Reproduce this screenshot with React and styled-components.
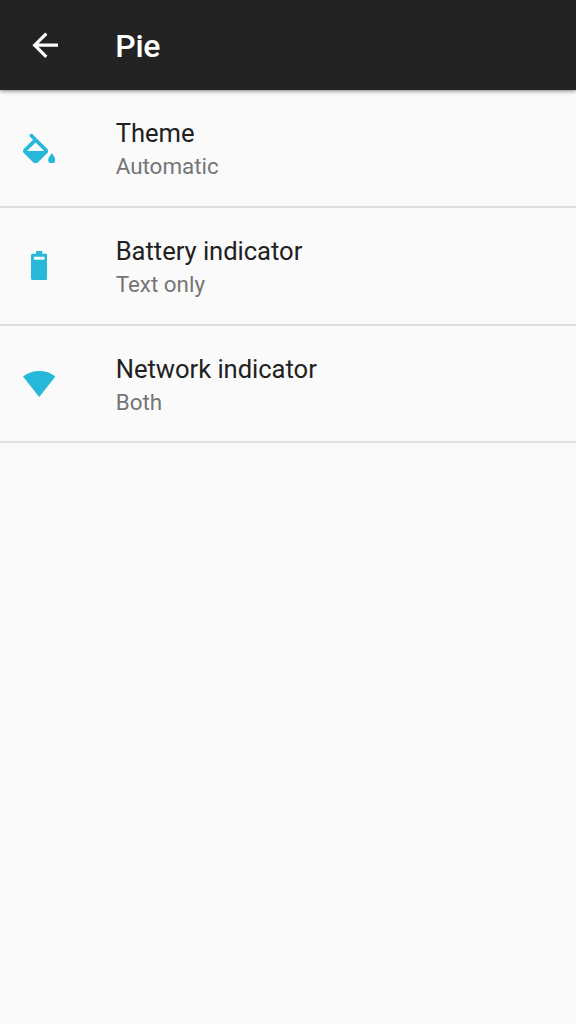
import React from "react";
import styled, { createGlobalStyle } from "styled-components";

const GlobalStyle = createGlobalStyle`
  body {
    margin: 0;
    background-color: #fafafa;
    font-family: Roboto, "Liberation Sans", sans-serif;
  }
`;
const Screen = styled.div`
  display: flex;
  flex-direction: column;
  min-height: 100vh;
  background-color: #fafafa;
`;
const Toolbar = styled.header`
  display: flex;
  align-items: center;
  height: 90px;
  background-color: #232323;
  box-shadow: 0 1px 4px rgba(0, 0, 0, 0.5);
`;
const BackButton = styled.button`
  display: flex;
  box-sizing: border-box;
  width: 115.2px;
  padding: 0 0 0.6px 25.6px;
  border: none;
  background: none;
  color: #ffffff;
  cursor: pointer;
`;
const Title = styled.h1`
  margin: 2px 0 0;
  font-size: 32px;
  font-weight: 500;
  line-height: 38px;
  letter-spacing: -0.2px;
  color: #ffffff;
`;
const Row = styled.div`
  display: flex;
  align-items: center;
  box-sizing: border-box;
  height: 117.8px;
  border-bottom: 2px solid #dfdfdf;
`;
const IconSlot = styled.div`
  display: flex;
  justify-content: center;
  width: 78px;
  margin-right: 37.7px;
  color: #26b7d9;
`;
const RowText = styled.div`
  display: flex;
  flex-direction: column;
  padding-top: 3px;
`;
const RowTitle = styled.span`
  font-size: 25.6px;
  line-height: 34px;
  letter-spacing: -0.04px;
  color: #212121;
`;
const RowSummary = styled.span`
  font-size: 22.4px;
  line-height: 32px;
  color: #757575;
`;

const BackIcon = () => (
  <svg width="38.4" height="38.4" viewBox="0 0 24 24" fill="currentColor">
    <path d="M20 11H7.83l5.59-5.59L12 4l-8 8 8 8 1.41-1.41L7.83 13H20v-2z" />
  </svg>
);
const FillIcon = () => (
  <svg width="32.4" height="30.6" viewBox="3 0 18 17" fill="currentColor">
    <path d="M16.56 8.94L8.3.68C7.9.28 7.3.28 6.9.68c-.4.4-.4 1 0 1.4l1.69 1.71-5.15 5.15c-.59.59-.59 1.54 0 2.12l5.5 5.5c.29.29.68.44 1.06.44s.77-.15 1.06-.44l5.5-5.5c.59-.58.59-1.53 0-2.12zM5.21 10L10 5.21 14.79 10H5.21zM19 11.2s-2 2.25-2 3.75c0 1.13.9 2.05 2 2.05s2-.92 2-2.05c0-1.5-2-3.75-2-3.75z" />
  </svg>
);
const BatteryIcon = () => (
  <svg width="16.4" height="29" viewBox="0 0 16 29" preserveAspectRatio="none" fill="currentColor">
    <path
      fillRule="evenodd"
      d="M5 0h6v2.8h3.4A1.6 1.6 0 0 1 16 4.4v23a1.6 1.6 0 0 1-1.6 1.6H1.6A1.6 1.6 0 0 1 0 27.4v-23a1.6 1.6 0 0 1 1.6-1.6H5zM2.8 5.8v3h10.4v-3z"
    />
  </svg>
);
const NetworkIcon = () => (
  <svg width="32.4" height="27" viewBox="0 -1 33 27" preserveAspectRatio="none" fill="currentColor">
    <path d="M16.5 26L0 5.6C4.6 1.9 10.3 0 16.5 0S28.4 1.9 33 5.6z" />
  </svg>
);

const settings = [
  { icon: <FillIcon />, title: "Theme", summary: "Automatic" },
  { icon: <BatteryIcon />, title: "Battery indicator", summary: "Text only" },
  { icon: <NetworkIcon />, title: "Network indicator", summary: "Both" },
];

const App = () => (
  <>
    <GlobalStyle />
    <Screen>
      <Toolbar>
        <BackButton aria-label="Back">
          <BackIcon />
        </BackButton>
        <Title>Pie</Title>
      </Toolbar>
      {settings.map(({ icon, title, summary }) => (
        <Row key={title}>
          <IconSlot>{icon}</IconSlot>
          <RowText>
            <RowTitle>{title}</RowTitle>
            <RowSummary>{summary}</RowSummary>
          </RowText>
        </Row>
      ))}
    </Screen>
  </>
);

export default App;
